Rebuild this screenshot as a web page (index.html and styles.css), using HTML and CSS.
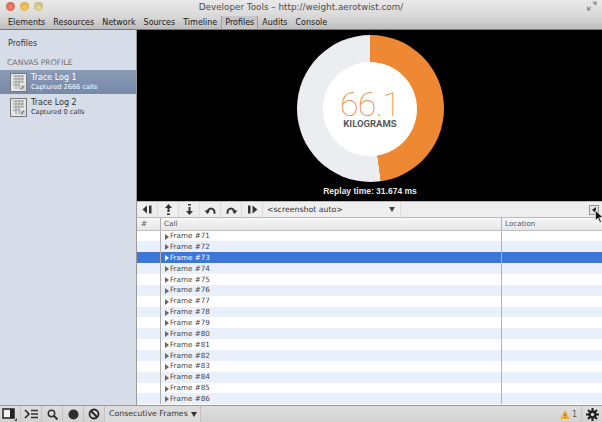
FILE: index.html
```html
<!DOCTYPE html>
<html lang="en">
<head>
    <meta charset="UTF-8">
    <title>Developer Tools</title>
    <link rel="stylesheet" href="styles.css">
</head>
<body>
    <div class="window">
        <!-- Title bar -->
        <div class="titlebar">
            <div class="lights">
                <span class="light red"></span>
                <span class="light yellow"></span>
                <span class="light green"></span>
            </div>
            <div class="title">Developer Tools – http://weight.aerotwist.com/</div>
            <svg class="expand" width="10" height="10" viewBox="0 0 10 10">
                <path d="M5.500 1H9V4.500M9 1L6.500 3.500M0.500 5.500V9H4M0.500 9L3.500 6" fill="none" stroke="#8b8b8b" stroke-width="1.200"/>
            </svg>
        </div>
        <!-- Panel tabs -->
        <div class="tabs">
            <span class="tab">Elements</span>
            <span class="tab">Resources</span>
            <span class="tab">Network</span>
            <span class="tab">Sources</span>
            <span class="tab">Timeline</span>
            <span class="tab active">Profiles</span>
            <span class="tab">Audits</span>
            <span class="tab">Console</span>
        </div>

        <div class="main">
            <!-- Sidebar -->
            <div class="sidebar">
                <div class="side-title">Profiles</div>
                <div class="side-section">CANVAS PROFILE</div>
                <div class="log selected">
                    <svg class="log-icon" width="17" height="19" viewBox="0 0 17 19">
                        <rect x="0.500" y="0.500" width="16" height="18" fill="#e6e6e6" stroke="#777"/>
                        <path d="M3 3H14M3 6H14M3 9H14M3 12H9M6 2V16M9 2V16M12 2V9" stroke="#999" stroke-width="1"/>
                        <path d="M10 12H15V17H10Z" fill="#ccc"/>
                        <path d="M11 16L14 13" stroke="#555" stroke-width="1"/>
                    </svg>
                    <div class="log-text">
                        <div class="log-name">Trace Log 1</div>
                        <div class="log-sub">Captured 2666 calls</div>
                    </div>
                </div>
                <div class="log">
                    <svg class="log-icon" width="17" height="19" viewBox="0 0 17 19">
                        <rect x="0.500" y="0.500" width="16" height="18" fill="#e6e6e6" stroke="#777"/>
                        <path d="M3 3H14M3 6H14M3 9H14M3 12H9M6 2V16M9 2V16M12 2V9" stroke="#999" stroke-width="1"/>
                        <path d="M10 12H15V17H10Z" fill="#ccc"/>
                        <path d="M11 16L14 13" stroke="#555" stroke-width="1"/>
                    </svg>
                    <div class="log-text">
                        <div class="log-name">Trace Log 2</div>
                        <div class="log-sub">Captured 0 calls</div>
                    </div>
                </div>
            </div>

            <div class="content">
                <!-- Replay view -->
                <div class="replay">
                    <div class="donut">
                        <div class="donut-hole">
                            <div class="weight">66.1</div>
                            <div class="unit">KILOGRAMS</div>
                        </div>
                    </div>
                    <div class="replay-time">Replay time: 31.674 ms</div>
                </div>

                <!-- Controls -->
                <div class="controls">
                    <span class="ctrl">
                        <svg width="11" height="9" viewBox="0 0 11 9"><path d="M5 0.500V8.500L0.500 4.500ZM7 0.500H9.500V8.500H7Z" fill="#333"/></svg>
                    </span>
                    <span class="ctrl">
                        <svg width="9" height="11" viewBox="0 0 9 11"><path d="M4.500 0L8 4H5.500V8H3.500V4H1ZM3 9.500H6V11H3Z" fill="#333"/></svg>
                    </span>
                    <span class="ctrl">
                        <svg width="9" height="11" viewBox="0 0 9 11"><path d="M3 0H6V1.500H3ZM3.500 3H5.500V7H8L4.500 11L1 7H3.500Z" fill="#333"/></svg>
                    </span>
                    <span class="ctrl">
                        <svg width="13" height="8" viewBox="0 0 13 8"><path d="M3.500 6.500A3.500 4 0 0 1 10.500 6.500" fill="none" stroke="#333" stroke-width="2"/><path d="M0.500 4.500H6L3.500 8Z" fill="#333"/><circle cx="10.500" cy="7" r="1" fill="#333"/></svg>
                    </span>
                    <span class="ctrl">
                        <svg width="13" height="8" viewBox="0 0 13 8"><path d="M2.500 6.500A3.500 4 0 0 1 9.500 6.500" fill="none" stroke="#333" stroke-width="2"/><path d="M12.500 4.500H7L9.500 8Z" fill="#333"/><circle cx="2.500" cy="7" r="1" fill="#333"/></svg>
                    </span>
                    <span class="ctrl">
                        <svg width="11" height="9" viewBox="0 0 11 9"><path d="M1 0.500H3.500V8.500H1ZM5.500 0.500L10.500 4.500L5.500 8.500Z" fill="#333"/></svg>
                    </span>
                    <div class="select">
                        <span>&lt;screenshot auto&gt;</span>
                        <span class="select-arrow"></span>
                    </div>
                    <div class="dock-btn"><span class="dock-arrow"></span></div>
                    <svg class="cursor" width="9" height="13" viewBox="0 0 9 13"><path d="M0.500 0.500L8 7.500H4.500L6.500 12L4.800 12.500L3 8L0.500 10.500Z" fill="#111" stroke="#fff" stroke-width="0.600"/></svg>
                </div>

                <!-- Call table -->
                <div class="table">
                    <div class="thead">
                        <div class="c-num">#</div>
                        <div class="c-call">Call</div>
                        <div class="c-loc">Location</div>
                    </div>
                    <div class="row"><div class="c-num"></div><div class="c-call"><span class="tri"></span>Frame #71</div><div class="c-loc"></div></div>
                    <div class="row"><div class="c-num"></div><div class="c-call"><span class="tri"></span>Frame #72</div><div class="c-loc"></div></div>
                    <div class="row sel"><div class="c-num"></div><div class="c-call"><span class="tri"></span>Frame #73</div><div class="c-loc"></div></div>
                    <div class="row"><div class="c-num"></div><div class="c-call"><span class="tri"></span>Frame #74</div><div class="c-loc"></div></div>
                    <div class="row"><div class="c-num"></div><div class="c-call"><span class="tri"></span>Frame #75</div><div class="c-loc"></div></div>
                    <div class="row"><div class="c-num"></div><div class="c-call"><span class="tri"></span>Frame #76</div><div class="c-loc"></div></div>
                    <div class="row"><div class="c-num"></div><div class="c-call"><span class="tri"></span>Frame #77</div><div class="c-loc"></div></div>
                    <div class="row"><div class="c-num"></div><div class="c-call"><span class="tri"></span>Frame #78</div><div class="c-loc"></div></div>
                    <div class="row"><div class="c-num"></div><div class="c-call"><span class="tri"></span>Frame #79</div><div class="c-loc"></div></div>
                    <div class="row"><div class="c-num"></div><div class="c-call"><span class="tri"></span>Frame #80</div><div class="c-loc"></div></div>
                    <div class="row"><div class="c-num"></div><div class="c-call"><span class="tri"></span>Frame #81</div><div class="c-loc"></div></div>
                    <div class="row"><div class="c-num"></div><div class="c-call"><span class="tri"></span>Frame #82</div><div class="c-loc"></div></div>
                    <div class="row"><div class="c-num"></div><div class="c-call"><span class="tri"></span>Frame #83</div><div class="c-loc"></div></div>
                    <div class="row"><div class="c-num"></div><div class="c-call"><span class="tri"></span>Frame #84</div><div class="c-loc"></div></div>
                    <div class="row"><div class="c-num"></div><div class="c-call"><span class="tri"></span>Frame #85</div><div class="c-loc"></div></div>
                    <div class="row"><div class="c-num"></div><div class="c-call"><span class="tri"></span>Frame #86</div><div class="c-loc"></div></div>
                </div>
            </div>
        </div>

        <!-- Status bar -->
        <div class="statusbar">
            <span class="sb-btn">
                <svg width="16" height="13" viewBox="0 0 16 13"><rect x="1" y="1" width="11" height="9" fill="#f4f4f4" stroke="#222" stroke-width="1.500"/><rect x="8" y="1" width="4" height="9" fill="#222"/><path d="M15 10V13H12Z" fill="#444"/></svg>
            </span>
            <span class="sb-btn">
                <svg width="14" height="10" viewBox="0 0 14 10"><path d="M1 1L5 5L1 9" fill="none" stroke="#222" stroke-width="1.500"/><path d="M7 1.500H14M7 5H14M7 8.500H14" stroke="#333" stroke-width="1.300"/></svg>
            </span>
            <span class="sb-btn">
                <svg width="11" height="11" viewBox="0 0 11 11"><circle cx="4.500" cy="4.500" r="3.200" fill="none" stroke="#333" stroke-width="1.500"/><path d="M7 7L10.500 10.500" stroke="#333" stroke-width="2"/></svg>
            </span>
            <span class="sb-btn">
                <svg width="11" height="11" viewBox="0 0 11 11"><circle cx="5.500" cy="5.500" r="5" fill="#2e2e2e"/></svg>
            </span>
            <span class="sb-btn">
                <svg width="12" height="12" viewBox="0 0 12 12"><circle cx="6" cy="6" r="4.500" fill="none" stroke="#222" stroke-width="1.800"/><path d="M3 3L9 9" stroke="#222" stroke-width="1.800"/></svg>
            </span>
            <div class="frames">Consecutive Frames<span class="frames-arrow"></span></div>
            <div class="warn">
                <svg width="10" height="9" viewBox="0 0 10 9"><path d="M5 0L10 9H0Z" fill="#eeb340"/><path d="M5 3V6M5 7V8" stroke="#7a5a10" stroke-width="1"/></svg>
                <span>1</span>
            </div>
            <span class="gear-btn">
                <svg width="13" height="13" viewBox="0 0 13 13"><circle cx="6.500" cy="6.500" r="3" fill="none" stroke="#222" stroke-width="2.500"/><path d="M6.500 0V13M0 6.500H13M2 2L11 11M11 2L2 11" stroke="#222" stroke-width="2"/><circle cx="6.500" cy="6.500" r="1.700" fill="#d8d8d8"/></svg>
            </span>
        </div>
    </div>
</body>
</html>
```

FILE: styles.css
```css
html, body {
    height: 100%;
    margin: 0;
}

body {
    font-family: "DejaVu Sans", sans-serif;
    background-color: #000;
    overflow: hidden;
}

.window {
    width: 602px;
    height: 422px;
    display: flex;
    flex-direction: column;
}

/* Title bar */
.titlebar {
    height: 16px;
    padding-bottom: 3px;
    box-sizing: border-box;
    display: flex;
    align-items: center;
    position: relative;
    justify-content: center;
    background: linear-gradient(#e9e9e9, #d9d9d9);
}

.lights {
    position: absolute;
    left: 6px;
    top: 2px;
    display: flex;
    gap: 5px;
}

.light {
    width: 9px;
    height: 9px;
    border-radius: 50%;
}

.red {
    background: radial-gradient(circle at 50% 60%, #f08a70, #c8553e);
}

.yellow {
    background: radial-gradient(circle at 50% 60%, #f6d070, #d89a2c);
}

.green {
    background: radial-gradient(circle at 50% 60%, #e8e0a0, #b8a860);
}

.title {
    font-size: 8.800px;
    color: #4c4c4c;
}

.expand {
    position: absolute;
    right: 5px;
    top: 1px;
}

/* Tabs */
.tabs {
    height: 14px;
    padding-left: 4px;
    box-sizing: border-box;
    display: flex;
    align-items: flex-end;
    background: linear-gradient(#d9d9d9, #bdbdbd);
    border-bottom: 1px solid #777;
}

.tab {
    font-size: 8px;
    color: #202020;
    padding: 0 4px;
    line-height: 13px;
    white-space: nowrap;
}

.tab.active {
    background-color: #c6c6c6;
    border-left: 1px solid #a0a0a0;
    border-right: 1px solid #a0a0a0;
    padding: 0 3px;
}

.main {
    flex: 1;
    display: flex;
    min-height: 0;
}

/* Sidebar */
.sidebar {
    width: 137px;
    background-color: #d6dde8;
    border-right: 1px solid #9a9a9a;
    box-sizing: border-box;
    flex-shrink: 0;
}

.side-title {
    font-size: 8px;
    color: #333;
    padding: 7px 0 0 8px;
    line-height: 13px;
}

.side-section {
    font-size: 7.700px;
    color: #6f6f6f;
    padding: 6px 0 0 7px;
    line-height: 13px;
    margin-bottom: 1px;
}

.log {
    height: 24px;
    margin-bottom: 1px;
    display: flex;
    align-items: center;
    gap: 4px;
    padding-left: 10px;
    color: #333;
}

.log.selected {
    background: linear-gradient(#8a9bb8, #7889a8);
    color: #fff;
}

.log-name {
    font-size: 8px;
    line-height: 10px;
}

.log-sub {
    font-size: 6.600px;
    line-height: 8px;
}

/* Right side */
.content {
    flex: 1;
    min-width: 0;
    display: flex;
    flex-direction: column;
}

.replay {
    height: 171px;
    background-color: #000;
    display: flex;
    flex-direction: column;
    align-items: center;
    padding: 5px 0 0 1px;
    box-sizing: border-box;
}

.donut {
    width: 147px;
    height: 147px;
    flex-shrink: 0;
    border-radius: 50%;
    background: conic-gradient(#ef8833 0deg 172deg, #ecedf1 172deg 360deg);
    display: flex;
    justify-content: center;
    align-items: center;
}

.donut-hole {
    width: 94px;
    height: 94px;
    border-radius: 50%;
    background-color: #fff;
    display: flex;
    flex-direction: column;
    align-items: center;
    justify-content: center;
}

.weight {
    font-family: Roboto, sans-serif;
    font-weight: 100;
    font-size: 34px;
    letter-spacing: -0.800px;
    line-height: 30px;
    color: #e98f45;
}

.unit {
    font-family: Roboto, sans-serif;
    font-weight: 700;
    font-size: 9.500px;
    line-height: 10px;
    color: #55585f;
}

.replay-time {
    font-family: "Liberation Sans", sans-serif;
    font-size: 8.500px;
    font-weight: 700;
    color: #e8e8e8;
    margin-top: 3px;
    line-height: 12px;
}

/* Controls */
.controls {
    height: 17px;
    display: flex;
    align-items: center;
    background-color: #eeeeee;
    border-top: 1px solid #bbb;
    border-bottom: 1px solid #bbb;
    box-sizing: border-box;
    position: relative;
}

.ctrl {
    width: 21px;
    height: 15px;
    flex-shrink: 0;
    display: flex;
    align-items: center;
    justify-content: center;
    border-right: 1px solid #dcdcdc;
    box-sizing: border-box;
}

.select {
    width: 138px;
    height: 15px;
    padding: 0 5px 0 4px;
    display: flex;
    align-items: center;
    justify-content: space-between;
    font-size: 7.800px;
    color: #333;
    box-sizing: border-box;
    border-right: 1px solid #dcdcdc;
}

.select-arrow {
    border-left: 3px solid transparent;
    border-right: 3px solid transparent;
    border-top: 5px solid #444;
}

.dock-btn {
    margin-left: auto;
    margin-right: 3px;
    width: 8px;
    height: 8px;
    border: 1px solid #9a8f9a;
    background-color: #e4e4e4;
    display: flex;
    align-items: center;
    justify-content: center;
}

.dock-arrow {
    border-top: 3px solid transparent;
    border-bottom: 3px solid transparent;
    border-right: 4px solid #222;
}

.cursor {
    position: absolute;
    right: -2px;
    top: 8px;
}

/* Table */
.table {
    flex: 1;
    background-color: #fff;
    overflow: hidden;
    min-height: 0;
}

.thead {
    height: 12.600px;
    display: flex;
    font-size: 7.200px;
    color: #555;
    background: linear-gradient(#f7f7f7, #e6e6e6);
    border-bottom: 1px solid #c0c0c0;
    box-sizing: border-box;
    line-height: 11px;
}

.row {
    height: 10.870px;
    display: flex;
    font-size: 7.200px;
    line-height: 10.870px;
    color: #444;
}

.row:nth-child(odd) {
    background-color: #eaf0fb;
}

.row.sel {
    background-color: #3d76d6;
    color: #fff;
}

.c-num {
    width: 24px;
    padding-left: 4px;
    box-sizing: border-box;
    border-right: 1px solid #b0b0b0;
    flex-shrink: 0;
}

.c-call {
    width: 341px;
    padding-left: 3px;
    box-sizing: border-box;
    border-right: 1px solid #b0b0b0;
    flex-shrink: 0;
}

.row .c-call {
    padding: 1px 0 0 4px;
    display: flex;
    align-items: center;
}

.c-loc {
    flex: 1;
    padding-left: 3px;
}

.tri {
    border-top: 3px solid transparent;
    border-bottom: 3px solid transparent;
    border-left: 4px solid #666;
    margin-right: 1px;
}

.row.sel .tri {
    border-left-color: #fff;
}

/* Status bar */
.statusbar {
    height: 17px;
    display: flex;
    align-items: center;
    background: linear-gradient(#dedede, #d2d2d2);
    border-top: 1px solid #999;
    box-sizing: border-box;
}

.sb-btn {
    width: 21px;
    height: 16px;
    flex-shrink: 0;
    display: flex;
    align-items: center;
    justify-content: center;
    border-right: 1px solid #c2c2c2;
    box-sizing: border-box;
}

.frames {
    font-size: 7.800px;
    color: #333;
    padding: 0 3px 0 4px;
    height: 16px;
    line-height: 16px;
    display: flex;
    align-items: center;
    gap: 3px;
    background-color: #dcdcdc;
    border-right: 1px solid #c2c2c2;
}

.frames-arrow {
    border-left: 3px solid transparent;
    border-right: 3px solid transparent;
    border-top: 5px solid #333;
}

.warn {
    margin-left: auto;
    display: flex;
    align-items: center;
    gap: 2px;
    font-size: 8px;
    color: #555;
    padding-right: 4px;
}

.gear-btn {
    width: 21px;
    height: 16px;
    display: flex;
    align-items: center;
    justify-content: center;
    border-left: 1px solid #c2c2c2;
    box-sizing: border-box;
}
```
